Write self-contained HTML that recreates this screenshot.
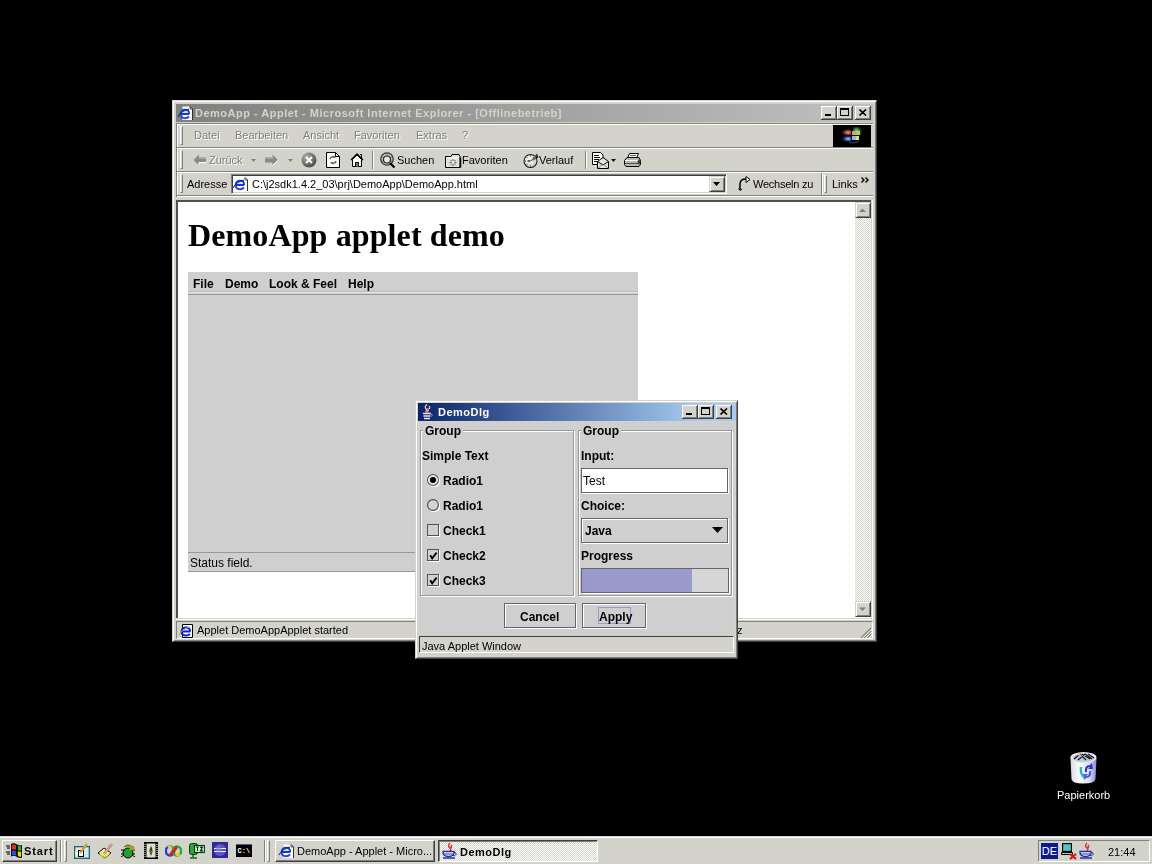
<!DOCTYPE html>
<html><head><meta charset="utf-8">
<style>
*{margin:0;padding:0;box-sizing:border-box}
html,body{width:1152px;height:864px;overflow:hidden;background:#000;font-family:"Liberation Sans",sans-serif;font-size:11px;color:#000}
div,span,svg{position:absolute}
.t{white-space:nowrap;line-height:13px;will-change:transform}
.b{font-weight:bold}
.face{background:#d4d3cb}
.dis{color:#808080;text-shadow:1px 1px #fff}
.wbtn{width:16px;height:14px;background:#d4d3cb;border-style:solid;border-width:0 1px 1px 0;border-color:#404040;box-shadow:inset 1px 1px #fff,inset -1px -1px #808080}
.grip{width:3px;border-style:solid;border-width:1px;border-color:#fff #808080 #808080 #fff}
.sep{width:2px;border-left:1px solid #808080;border-right:1px solid #fff}
.dither{background-color:#fff;background-image:linear-gradient(45deg,#d4d3cb 25%,transparent 25%,transparent 75%,#d4d3cb 75%),linear-gradient(45deg,#d4d3cb 25%,transparent 25%,transparent 75%,#d4d3cb 75%);background-size:2px 2px;background-position:0 0,1px 1px}
.sbtn{width:16px;height:16px;background:#d4d3cb;border-style:solid;border-width:1px;border-color:#d4d3cb #404040 #404040 #d4d3cb;box-shadow:inset 1px 1px #fff,inset -1px -1px #808080}
</style></head><body>
<svg width="0" height="0" style="left:0;top:0"><defs>
<symbol id="ie" viewBox="0 0 16 16">
  <path d="M5.5 2.5H13L15.5 5V16.5H5.5Z" fill="#fff"/>
  <path d="M13 2.5L15.5 5V16.5H5.5" fill="none" stroke="#303030"/>
  <path d="M13 2.5V5H15.5" fill="none" stroke="#303030" stroke-width="0.8"/>
  <path d="M12.2 10H3.6Q3.6 5.7 8 5.7Q12.2 5.7 12.2 10" fill="#c8e8ff" stroke="#1838c8" stroke-width="1.8"/>
  <path d="M3.6 10Q3.6 14.2 8 14.2Q10.5 14.2 12 12.5" fill="none" stroke="#2848d8" stroke-width="2"/>
  <path d="M1 13Q4 7 12 5" fill="none" stroke="#0a1870" stroke-width="1"/>
</symbol>
<symbol id="ieS" viewBox="0 0 16 16">
  <path d="M4.5 1.5H14.5V14.5H4.5Z" fill="#fff" stroke="#000"/>
  <path d="M12.2 8.5H3.6Q3.6 4.5 8 4.5Q12.2 4.5 12.2 8.5" fill="#d0e8ff" stroke="#1020d0" stroke-width="1.8"/>
  <path d="M3.6 8.5Q3.6 12.5 8 12.5Q10.5 12.5 12 11" fill="none" stroke="#1020d0" stroke-width="2"/>
  <path d="M1 12Q4 6 12 4" fill="none" stroke="#b0b020" stroke-width="1"/>
</symbol>
</defs></svg>

<!-- ============ IE window ============ -->
<div style="left:172px;top:100px;width:705px;height:542px;background:#d4d3cb;border-style:solid;border-width:1px;border-color:#d4d3cb #404040 #404040 #d4d3cb;box-shadow:inset 1px 1px #fff,inset -1px -1px #808080"></div>
<!-- title bar -->
<div style="left:176px;top:104px;width:697px;height:18px;background:linear-gradient(90deg,#808080,#c0c0c0)"></div>
<svg style="left:177px;top:104px" width="16" height="16"><use href="#ie"/></svg>
<div class="t b" style="left:195px;top:107px;color:#d4d3cb;letter-spacing:0.5px">DemoApp - Applet - Microsoft Internet Explorer - [Offlinebetrieb]</div>
<div class="wbtn" style="left:821px;top:106px"><div style="left:4px;top:8px;width:6px;height:2px;background:#000"></div></div>
<div class="wbtn" style="left:837px;top:106px"><div style="left:3px;top:2px;width:9px;height:8px;border:1px solid #000;border-top-width:2px"></div></div>
<div class="wbtn" style="left:855px;top:106px"><svg style="left:4px;top:3px" width="8" height="7" viewBox="0 0 8 7"><path d="M0.5 0.5L7 6.5M7 0.5L0.5 6.5" stroke="#000" stroke-width="1.6"/></svg></div>

<!-- rebar frame -->
<div style="left:176px;top:123px;width:697px;height:1px;background:#808080"></div>
<div style="left:176px;top:124px;width:697px;height:1px;background:#fff"></div>
<div style="left:176px;top:123px;width:1px;height:74px;background:#808080"></div>
<div style="left:177px;top:124px;width:1px;height:73px;background:#fff"></div>
<div style="left:177px;top:147px;width:696px;height:1px;background:#808080"></div>
<div style="left:177px;top:148px;width:696px;height:1px;background:#fff"></div>
<div style="left:177px;top:171px;width:696px;height:1px;background:#808080"></div>
<div style="left:177px;top:172px;width:696px;height:1px;background:#fff"></div>
<div style="left:177px;top:195px;width:696px;height:1px;background:#808080"></div>
<div style="left:177px;top:196px;width:696px;height:1px;background:#fff"></div>

<!-- menu band -->
<div class="grip" style="left:180px;top:126px;height:19px"></div>
<div class="t dis" style="left:194px;top:129px">Datei</div>
<div class="t dis" style="left:235px;top:129px">Bearbeiten</div>
<div class="t dis" style="left:303px;top:129px">Ansicht</div>
<div class="t dis" style="left:354px;top:129px">Favoriten</div>
<div class="t dis" style="left:416px;top:129px">Extras</div>
<div class="t dis" style="left:462px;top:129px">?</div>
<!-- windows logo -->
<svg style="left:833px;top:125px" width="38" height="22" viewBox="0 0 38 22">
<defs>
<radialGradient id="wr" cx="0.7" cy="0.5" r="0.6"><stop offset="0" stop-color="#f0a080"/><stop offset="0.5" stop-color="#803030"/><stop offset="1" stop-color="#000" stop-opacity="0"/></radialGradient>
<radialGradient id="wb" cx="0.7" cy="0.4" r="0.6"><stop offset="0" stop-color="#b0d0ff"/><stop offset="0.5" stop-color="#203880"/><stop offset="1" stop-color="#000" stop-opacity="0"/></radialGradient>
<radialGradient id="wg" cx="0.4" cy="0.5" r="0.7"><stop offset="0" stop-color="#c0f0a0"/><stop offset="0.6" stop-color="#206020"/><stop offset="1" stop-color="#000" stop-opacity="0"/></radialGradient>
</defs>
<rect width="38" height="22" fill="#000"/>
<rect x="6" y="4" width="13" height="7" fill="url(#wr)"/>
<rect x="6" y="11" width="13" height="7" fill="url(#wb)"/>
<rect x="20" y="2" width="9" height="10" fill="url(#wg)"/>
<rect x="19" y="6" width="4" height="4" fill="#d8a070"/>
<rect x="23" y="6" width="4" height="4" fill="#a0d080"/>
<rect x="19" y="11" width="4" height="4" fill="#90b8e8"/>
<rect x="23" y="11" width="3" height="4" fill="#e8e050"/>
<path d="M18.5 5V16M18 10.5H28" stroke="#101010" stroke-width="1"/>
<path d="M16 17q4 2 10 -1" stroke="#304080" stroke-width="1.5" fill="none" opacity=".7"/>
</svg>

<!-- toolbar band -->
<div class="grip" style="left:180px;top:150px;height:19px"></div>
<div class="t dis" style="left:209px;top:154px">Zurück</div>
<div class="t" style="left:397px;top:154px">Suchen</div>
<div class="t" style="left:462px;top:154px">Favoriten</div>
<div class="t" style="left:539px;top:154px">Verlauf</div>
<div class="sep" style="left:372px;top:151px;height:18px"></div>
<div class="sep" style="left:585px;top:151px;height:18px"></div>

<!-- address band -->
<div class="grip" style="left:180px;top:174px;height:19px"></div>
<div class="t" style="left:187px;top:178px">Adresse</div>
<div style="left:231px;top:174px;width:496px;height:20px;background:#fff;border-style:solid;border-width:1px;border-color:#808080 #fff #fff #808080;box-shadow:inset 1px 1px #404040,inset -1px -1px #d4d3cb"></div>
<div class="t" style="left:252px;top:178px">C:\j2sdk1.4.2_03\prj\DemoApp\DemoApp.html</div>
<div class="sbtn" style="left:709px;top:176px;height:16px"><svg style="left:3px;top:5px" width="7" height="4" viewBox="0 0 7 4"><path d="M0 0h7L3.5 4z" fill="#000"/></svg></div>
<div class="t" style="left:753px;top:178px;letter-spacing:-0.25px">Wechseln zu</div>
<div class="sep" style="left:821px;top:173px;height:22px"></div>
<div class="grip" style="left:824px;top:175px;height:18px"></div>
<div class="t" style="left:832px;top:178px">Links</div>


<!-- content pane -->
<div style="left:176px;top:200px;width:697px;height:420px;background:#fff;border-style:solid;border-width:2px 0 0 2px;border-color:#505050"></div>
<div style="left:176px;top:618px;width:697px;height:1px;background:#d4d3cb"></div>
<div style="left:176px;top:619px;width:697px;height:1px;background:#fff"></div>
<div style="left:871px;top:200px;width:1px;height:419px;background:#d4d3cb"></div>
<div style="left:872px;top:200px;width:1px;height:420px;background:#fff"></div>
<div class="dither" style="left:855px;top:202px;width:16px;height:415px"></div>
<div class="sbtn" style="left:855px;top:202px"><svg style="left:3px;top:5px" width="8" height="5" viewBox="0 0 8 5"><path d="M0 4h7L3.5 0.5z" fill="#808080"/></svg></div>
<div class="sbtn" style="left:855px;top:601px"><svg style="left:3px;top:5px" width="8" height="5" viewBox="0 0 8 5"><path d="M0 0.5h7L3.5 4z" fill="#808080"/></svg></div>

<div class="t b" style="left:188px;top:217px;font-family:'Liberation Serif',serif;font-size:32px;line-height:37px;letter-spacing:0.12px">DemoApp applet demo</div>


<!-- toolbar icons -->
<svg style="left:193px;top:154px" width="14" height="12" viewBox="0 0 14 12"><path d="M0.5 6L6 0.5V3.5H13V8.5H6V11.5Z" fill="#8a8a8a"/><path d="M6 3.5H13V5H6z" fill="#a8a8a8"/><path d="M6 11.5V8.5H13" fill="none" stroke="#fff" stroke-width="1"/></svg>
<svg style="left:251px;top:159px" width="5" height="3" viewBox="0 0 5 3"><path d="M0 0h5L2.5 3z" fill="#808080"/></svg>
<svg style="left:264px;top:154px" width="15" height="12" viewBox="0 0 15 12"><path d="M14 6L8.5 0.5V3.5H1V8.5H8.5V11.5Z" fill="#8a8a8a"/><path d="M1 3.5H9V5H1z" fill="#a8a8a8"/><path d="M8.5 11.5L14.5 6" fill="none" stroke="#fff" stroke-width="1"/></svg>
<svg style="left:288px;top:159px" width="5" height="3" viewBox="0 0 5 3"><path d="M0 0h5L2.5 3z" fill="#808080"/></svg>
<svg style="left:301px;top:152px" width="16" height="16" viewBox="0 0 16 16"><defs><radialGradient id="gs" cx="0.35" cy="0.3" r="0.8"><stop offset="0" stop-color="#b0b0b0"/><stop offset="1" stop-color="#404040"/></radialGradient></defs><circle cx="8" cy="8" r="7.5" fill="url(#gs)"/><path d="M5 5L11 11M11 5L5 11" stroke="#fff" stroke-width="2"/></svg>
<svg style="left:326px;top:152px" width="14" height="16" viewBox="0 0 14 16"><path d="M0.5 0.5H9.5L13.5 4.5V15.5H0.5Z" fill="#fff" stroke="#000"/><path d="M9.5 0.5V4.5H13.5" fill="none" stroke="#000"/><path d="M4 7a3 3 0 0 1 5-1.5M10 9a3 3 0 0 1-5 1.5" stroke="#6a6a6a" stroke-width="1.6" fill="none"/><path d="M8 4l2 2-3 0z M6 12l-2-2 3 0z" fill="#6a6a6a"/></svg>
<svg style="left:350px;top:153px" width="14" height="14" viewBox="0 0 14 14"><path d="M1 7L7 1L13 7" fill="none" stroke="#000" stroke-width="1.4"/><path d="M2.5 6.5V13.5H11.5V6.5L7 2z" fill="#fff" stroke="#000"/><path d="M5.5 13.5V9.5H8.5V13.5" fill="#808080" stroke="#000"/><path d="M10 1.5h1.5V5" stroke="#000" fill="none"/></svg>
<svg style="left:380px;top:152px" width="17" height="17" viewBox="0 0 17 17"><circle cx="7" cy="7" r="6.2" fill="#c8c8c8" stroke="#303030" stroke-width="1.3"/><path d="M2 5q5 2 10 0M2 9q5 -2 10 0M7 1v12" stroke="#777" stroke-width="1" fill="none"/><circle cx="7" cy="7.5" r="3.5" fill="#e8e8e8" stroke="#222" stroke-width="1.2"/><path d="M10 11L14.5 15.5" stroke="#000" stroke-width="2.2"/></svg>
<svg style="left:445px;top:154px" width="17" height="14" viewBox="0 0 17 14"><path d="M0.5 2.5H6L7 0.5H14L15 2.5V13.5H0.5Z" fill="#e0e0e0" stroke="#000"/><path d="M15.5 3.5V13.5" stroke="#000" stroke-width="1.5"/><path d="M1 4H14" stroke="#fff"/><path d="M8 5v7M4.5 8.5h7M5.5 6l5 5M10.5 6l-5 5" stroke="#555" stroke-width="0.9"/><circle cx="8" cy="8.5" r="1.4" fill="#fff"/></svg>
<svg style="left:523px;top:152px" width="16" height="16" viewBox="0 0 16 16"><circle cx="7.5" cy="9" r="6.5" fill="#d8d8d8" stroke="#202020" stroke-width="1.1"/><circle cx="6.5" cy="8" r="4" fill="#f0f0f0"/><path d="M7.5 3.5v1M2 9h1M7.5 13.5v1M3.5 5l.7.7M3.5 13l.7-.7" stroke="#303030"/><path d="M7.5 9L14 1.5L15.5 5.5Z" fill="#202020"/><path d="M7.5 9L14 1.5L12 8Z" fill="#707070"/><path d="M7.5 9h-3" stroke="#000" stroke-width="1.2"/></svg>
<svg style="left:592px;top:152px" width="17" height="17" viewBox="0 0 17 17"><path d="M0.5 0.5H8.5L11 3V12.5H0.5Z" fill="#fff" stroke="#000"/><path d="M2 3.5h5M2 5.5h6M2 7.5h5M2 9.5h4" stroke="#000" stroke-width="1"/><path d="M5.5 16.5V9.5L11 5.5L16.5 9.5V16.5Z" fill="#e4e4e4" stroke="#000"/><path d="M5.5 9.5L11 13L16.5 9.5" fill="none" stroke="#000"/><path d="M6.5 16L10 12.5M15.5 16L12 12.5" stroke="#808080"/></svg>
<svg style="left:611px;top:159px" width="5" height="3" viewBox="0 0 5 3"><path d="M0 0h5L2.5 3z" fill="#000"/></svg>
<svg style="left:624px;top:153px" width="17" height="14" viewBox="0 0 17 14"><path d="M5.5 0.5H14.5L12.5 5H3.5Z" fill="#fff" stroke="#000"/><path d="M6 2.5h6" stroke="#606060"/><path d="M0.5 7.5L3 4.5H15L16.5 7.5V11.5L15 13.5H2L0.5 11.5Z" fill="#b8b8b8" stroke="#000"/><path d="M1 7.5H16" stroke="#fff"/><path d="M1 10.5H16" stroke="#505050"/><ellipse cx="15" cy="9" rx="1.5" ry="2.5" fill="#404040"/></svg>
<!-- address icons -->
<svg style="left:232px;top:175px" width="16" height="16"><use href="#ie"/></svg>
<svg style="left:737px;top:176px" width="14" height="15" viewBox="0 0 14 15"><path d="M3 14V8Q3 3 9 3H11" fill="none" stroke="#000" stroke-width="1.5"/><path d="M9 0.5L13 3.5L9 6.5Z" fill="#fff" stroke="#000"/><path d="M5 13l-2 1.5-1.5-2" stroke="#000" fill="none"/></svg>
<svg style="left:861px;top:177px" width="8" height="7" viewBox="0 0 8 7"><path d="M0.5 0.5L3 3L0.5 5.5M4.5 0.5L7 3L4.5 5.5" fill="none" stroke="#000" stroke-width="1.4"/></svg>
<!-- status icon -->
<svg style="left:178px;top:623px" width="16" height="16"><use href="#ieS"/></svg>
<!-- resize grip -->
<svg style="left:860px;top:627px" width="12" height="12" viewBox="0 0 12 12"><path d="M11 1L1 11M11 4L4 11M11 7L7 11" stroke="#808080" stroke-width="1.2"/><path d="M12 2L2 12M12 5L5 12M12 8L8 12" stroke="#fff" stroke-width="0.8"/></svg>

<!-- applet -->
<div style="left:188px;top:272px;width:450px;height:300px;background:#cfcfcf"></div>
<div style="left:188px;top:291px;width:450px;height:1px;background:#bdbdbd"></div>
<div style="left:188px;top:292px;width:450px;height:1px;background:#e6e6e6"></div>
<div style="left:188px;top:294px;width:450px;height:1px;background:#999"></div>
<div class="t b" style="left:193px;top:278px;font-size:12px">File</div>
<div class="t b" style="left:225px;top:278px;font-size:12px">Demo</div>
<div class="t b" style="left:269px;top:278px;font-size:12px">Look &amp; Feel</div>
<div class="t b" style="left:348px;top:278px;font-size:12px">Help</div>
<div style="left:188px;top:552px;width:450px;height:1px;background:#999"></div>
<div style="left:188px;top:571px;width:450px;height:1px;background:#999"></div>
<div class="t" style="left:190px;top:557px;font-size:12px">Status field.</div>

<!-- status bar -->
<div style="left:176px;top:621px;width:697px;height:18px;border-style:solid;border-width:1px;border-color:#808080 #fff #fff #808080"></div>
<div class="t" style="left:197px;top:624px">Applet DemoAppApplet started</div>
<div class="t" style="left:737px;top:624px">z</div>


<!-- ============ Dialog ============ -->
<div style="left:415px;top:400px;width:323px;height:259px;background:#d4d3cb;border-style:solid;border-width:1px;border-color:#d4d3cb #404040 #404040 #d4d3cb;box-shadow:inset 1px 1px #fff,inset -1px -1px #808080"></div>
<div style="left:418px;top:403px;width:318px;height:18px;background:linear-gradient(90deg,#0a246a 0%,#a6caf0 88%)"></div>
<svg style="left:421px;top:404px" width="14" height="16" viewBox="0 0 14 16">
  <path d="M6 0.5Q3 3 5 5Q6.5 6.5 4.5 8" stroke="#e8c8e8" stroke-width="1.2" fill="none"/>
  <path d="M4 4.5Q6 3 6 6Q6 8 4.5 8.5L7.5 8.5Q9 6 7.5 4Z" fill="#f08050"/>
  <path d="M8 2Q9.5 3 8.5 5" stroke="#fff" stroke-width="1" fill="none"/>
  <path d="M2 9.5H10M2.5 12H9.5M3 14.5H9" stroke="#e8e0ff" stroke-width="1.3"/>
  <path d="M10 10Q12.5 10.5 10.5 12.5" stroke="#9090e0" stroke-width="1" fill="none"/>
</svg>
<div class="t b" style="left:438px;top:406px;color:#fff;letter-spacing:0.5px">DemoDlg</div>
<div class="wbtn" style="left:682px;top:405px"><div style="left:4px;top:8px;width:6px;height:2px;background:#000"></div></div>
<div class="wbtn" style="left:698px;top:405px"><div style="left:3px;top:2px;width:9px;height:8px;border:1px solid #000;border-top-width:2px"></div></div>
<div class="wbtn" style="left:716px;top:405px"><svg style="left:4px;top:3px" width="8" height="7" viewBox="0 0 8 7"><path d="M0.5 0.5L7 6.5M7 0.5L0.5 6.5" stroke="#000" stroke-width="1.6"/></svg></div>
<!-- dialog body -->
<div style="left:419px;top:422px;width:315px;height:214px;background:#cfcfcf"></div>
<!-- group boxes -->
<div style="left:420px;top:430px;width:154px;height:166px;border:1px solid #999;box-shadow:1px 1px #fff,inset 1px 1px #fff"></div>
<div style="left:423px;top:425px;width:40px;height:12px;background:#cfcfcf"></div>
<div class="t b" style="left:425px;top:425px;font-size:12px">Group</div>
<div style="left:578px;top:430px;width:154px;height:166px;border:1px solid #999;box-shadow:1px 1px #fff,inset 1px 1px #fff"></div>
<div style="left:581px;top:425px;width:40px;height:12px;background:#cfcfcf"></div>
<div class="t b" style="left:583px;top:425px;font-size:12px">Group</div>
<!-- left group -->
<div class="t b" style="left:422px;top:450px;font-size:12px">Simple Text</div>
<svg style="left:427px;top:474px" width="13" height="13" viewBox="0 0 13 13"><circle cx="6.5" cy="6.5" r="5.5" fill="none" stroke="#fff" stroke-width="1.2" transform="translate(0.6,0.6)"/><circle cx="6" cy="6" r="5.4" fill="#ccc" stroke="#4a4a4a" stroke-width="1.1"/><circle cx="6" cy="6" r="4.3" fill="none" stroke="#fff" stroke-width="1"/><circle cx="6" cy="6" r="3" fill="#000"/></svg>
<div class="t b" style="left:443px;top:475px;font-size:12px">Radio1</div>
<svg style="left:427px;top:499px" width="13" height="13" viewBox="0 0 13 13"><circle cx="6.5" cy="6.5" r="5.5" fill="none" stroke="#fff" stroke-width="1.2" transform="translate(0.6,0.6)"/><circle cx="6" cy="6" r="5.4" fill="#d4d4d4" stroke="#4a4a4a" stroke-width="1.1"/></svg>
<div class="t b" style="left:443px;top:500px;font-size:12px">Radio1</div>
<svg style="left:427px;top:524px" width="13" height="13" viewBox="0 0 13 13"><rect x="1.5" y="1.5" width="11" height="11" fill="none" stroke="#fff"/><rect x="0.5" y="0.5" width="11" height="11" fill="#d0d0d0" stroke="#555"/></svg>
<div class="t b" style="left:443px;top:525px;font-size:12px">Check1</div>
<svg style="left:427px;top:549px" width="13" height="13" viewBox="0 0 13 13"><rect x="1.5" y="1.5" width="11" height="11" fill="none" stroke="#fff"/><rect x="0.5" y="0.5" width="11" height="11" fill="#d0d0d0" stroke="#555"/><path d="M3.2 6.2L5.2 9.3L9.6 3.6" stroke="#000" stroke-width="1.9" fill="none"/></svg>
<div class="t b" style="left:443px;top:550px;font-size:12px">Check2</div>
<svg style="left:427px;top:574px" width="13" height="13" viewBox="0 0 13 13"><rect x="1.5" y="1.5" width="11" height="11" fill="none" stroke="#fff"/><rect x="0.5" y="0.5" width="11" height="11" fill="#d0d0d0" stroke="#555"/><path d="M3.2 6.2L5.2 9.3L9.6 3.6" stroke="#000" stroke-width="1.9" fill="none"/></svg>
<div class="t b" style="left:443px;top:575px;font-size:12px">Check3</div>
<!-- right group -->
<div class="t b" style="left:581px;top:450px;font-size:12px">Input:</div>
<div style="left:581px;top:468px;width:147px;height:25px;background:#fff;border:1px solid #666;box-shadow:1px 1px #fff"></div>
<div class="t" style="left:583px;top:475px;font-size:12px">Test</div>
<div class="t b" style="left:581px;top:500px;font-size:12px">Choice:</div>
<div style="left:581px;top:518px;width:147px;height:25px;background:#cfcfcf;border:1px solid #666;box-shadow:1px 1px #fff,inset 1px 1px #fff"></div>
<div class="t b" style="left:585px;top:525px;font-size:12px">Java</div>
<svg style="left:712px;top:527px" width="11" height="6" viewBox="0 0 11 6"><path d="M0 0h11L5.5 6z" fill="#000"/></svg>
<div class="t b" style="left:581px;top:550px;font-size:12px">Progress</div>
<div style="left:581px;top:568px;width:148px;height:25px;background:#d6d6d6;border:1px solid #666;box-shadow:1px 1px #fff"></div>
<div style="left:582px;top:569px;width:110px;height:23px;background:#9999cc"></div>
<!-- buttons -->
<div style="left:504px;top:603px;width:72px;height:25px;border:1px solid #666;box-shadow:1px 1px #fff,inset 1px 1px #fff"></div>
<div class="t b" style="left:520px;top:611px;font-size:12px">Cancel</div>
<div style="left:582px;top:603px;width:64px;height:25px;border:1px solid #666;box-shadow:1px 1px #fff,inset 1px 1px #fff"></div>
<div style="left:598px;top:607px;width:33px;height:17px;border:1px solid #9999cc"></div>
<div class="t b" style="left:599px;top:611px;font-size:12px">Apply</div>
<!-- java applet window strip -->
<div style="left:419px;top:636px;width:315px;height:17px;border-style:solid;border-width:1px;border-color:#404040 #fff #fff #404040"></div>
<div class="t" style="left:422px;top:640px">Java Applet Window</div>

<!-- ============ Desktop icon ============ -->
<svg style="left:1068px;top:750px" width="32" height="36" viewBox="0 0 32 36">
  <defs><linearGradient id="bin" x1="0" x2="1"><stop offset="0" stop-color="#d8d8f0"/><stop offset="0.35" stop-color="#fffff0"/><stop offset="0.7" stop-color="#e0e0f8"/><stop offset="1" stop-color="#8a8ad0"/></linearGradient></defs>
  <path d="M2.5 8 L3.5 29 Q4 33.5 15 33.5 Q27 33.5 27.5 29 L28.5 8 Z" fill="url(#bin)"/>
  <ellipse cx="15.5" cy="7.5" rx="13" ry="5.5" fill="#e8e8f0"/>
  <ellipse cx="15.5" cy="8" rx="11" ry="4" fill="#b8c8d8"/>
  <path d="M6 9L12 4L18 10M10 10L17 4L24 9M14 4L22 9M20 4L26 8" stroke="#101020" stroke-width="1.1" fill="none"/>
  <path d="M8 5L11 3L14 6z" fill="#f0c0a0"/>
  <path d="M17 22 Q16 15 22 15 L24 13 L25 19 L20 19 L22 17 Q18.5 17 19 22Z" fill="#2838d0"/>
  <path d="M23 21 Q24 28 18 28 L16 30 L15 24 L20 24 L18 26 Q21.5 26 21 21Z" fill="#4060e0"/>
  <path d="M13 17 Q12 24 16 27" stroke="#30b0e0" stroke-width="2.5" fill="none"/>
</svg>
<div class="t" style="left:1057px;top:789px;color:#fff">Papierkorb</div>

<!-- ============ Taskbar ============ -->
<div style="left:0;top:836px;width:1152px;height:28px;background:#d4d3cb;border-top:1px solid #d4d3cb;box-shadow:inset 0 1px #fff"></div>
<div style="left:2px;top:840px;width:55px;height:22px;background:#d4d3cb;border-style:solid;border-width:1px;border-color:#fff #404040 #404040 #fff;box-shadow:inset -1px -1px #808080"></div>
<svg style="left:5px;top:842px" width="18" height="17" viewBox="0 0 18 17">
  <path d="M6 2Q9 0.5 12 2.5V15Q9 13 6 14.5Z" fill="#000"/>
  <path d="M12 2.5Q15 4 17 3V15.5Q15 16.5 12 15Z" fill="#000"/>
  <path d="M6.8 3Q9 2 11.2 3.3V8Q9 6.8 6.8 7.8Z" fill="#e83020"/>
  <path d="M12.8 3.6Q14.5 4.6 16.2 4.1V8.6Q14.5 9.1 12.8 8.3Z" fill="#30b030"/>
  <path d="M6.8 8.8Q9 7.8 11.2 9V13.7Q9 12.5 6.8 13.5Z" fill="#2050e8"/>
  <path d="M12.8 9.3Q14.5 10.1 16.2 9.6V14.4Q14.5 15 12.8 14Z" fill="#f0d020"/>
  <path d="M1 4h4M2 6h3M1 10h4M2 12h3" stroke="#000" stroke-width="1.2"/>
  <path d="M1.5 4h2M1.5 10h2" stroke="#e83020" stroke-width="0.8"/>
  <path d="M2 6h2M2 12h2" stroke="#2050e8" stroke-width="0.8"/>
</svg>
<div class="t b" style="left:24px;top:845px;letter-spacing:0.9px">Start</div>
<div class="sep" style="left:60px;top:840px;height:22px"></div>
<div class="grip" style="left:64px;top:840px;height:22px"></div>
<div class="sep" style="left:264px;top:840px;height:22px"></div>
<div class="grip" style="left:267px;top:840px;height:22px"></div>
<!-- task buttons -->
<div style="left:275px;top:840px;width:160px;height:22px;background:#d4d3cb;border-style:solid;border-width:1px;border-color:#fff #404040 #404040 #fff;box-shadow:inset -1px -1px #808080"></div>
<div class="t" style="left:297px;top:845px">DemoApp - Applet - Micro...</div>
<div class="dither" style="left:438px;top:840px;width:160px;height:22px;border-style:solid;border-width:1px;border-color:#404040 #fff #fff #404040;box-shadow:inset 1px 1px #808080"></div>
<div class="t b" style="left:460px;top:846px;letter-spacing:0.5px">DemoDlg</div>

<!-- quick launch -->
<svg style="left:74px;top:843px" width="16" height="16" viewBox="0 0 16 16"><rect x="0.5" y="3.5" width="15" height="12" fill="#d8e8e8" stroke="#0a3050"/><rect x="1" y="4" width="14" height="11" fill="none" stroke="#3aa0b0"/><circle cx="5" cy="10" r="4" fill="#f0f0e0"/><rect x="4.5" y="7.5" width="5" height="6" fill="#fff" stroke="#000"/><path d="M6 10L13 1" stroke="#d0a030" stroke-width="2.2"/></svg>
<svg style="left:97px;top:843px" width="17" height="16" viewBox="0 0 17 16"><path d="M1 10L7 5L14 10L8 15Z" fill="#f0f0a0" stroke="#000"/><path d="M3 11L8 14L13 10" stroke="#e0e020" stroke-width="1.5" fill="none"/><path d="M7 11L15 1" stroke="#c07070" stroke-width="2.5"/><path d="M7 11L15 1" stroke="#f0c0a0" stroke-width="1"/></svg>
<svg style="left:120px;top:843px" width="16" height="16" viewBox="0 0 16 16"><path d="M4 4Q8 0 12 4" fill="#a0a020" stroke="#606010"/><ellipse cx="8" cy="10" rx="5" ry="5" fill="#20a030" stroke="#000"/><path d="M1 7h3M1 11h3M1 14l3-2M12 7h3M12 11h3M15 14l-3-2" stroke="#000"/><circle cx="12" cy="5" r="2.5" fill="#a0a020"/></svg>
<svg style="left:144px;top:842px" width="14" height="17" viewBox="0 0 14 17"><rect x="0" y="0" width="14" height="17" fill="#000"/><rect x="2.5" y="1.5" width="9" height="14" fill="#e0e0d0"/><path d="M1 2v13M13 2v13" stroke="#fff" stroke-dasharray="1 1"/><path d="M7 4q3 4 0 10q-3 -6 0 -10" fill="#404020"/><path d="M5 10h4" stroke="#80a040"/></svg>
<svg style="left:165px;top:845px" width="17" height="12" viewBox="0 0 17 12"><ellipse cx="5" cy="6" rx="4.2" ry="4.5" fill="none" stroke="#2040d0" stroke-width="2.5"/><ellipse cx="12" cy="6" rx="4.2" ry="4.5" fill="none" stroke="#20b030" stroke-width="2.5"/><path d="M3 2.5Q5 1 7 3" stroke="#e0d020" stroke-width="2.5" fill="none"/><path d="M11 9Q13 11 15 9" stroke="#e0d020" stroke-width="2.5" fill="none"/><path d="M5 10L12 2" stroke="#e02020" stroke-width="2.8"/></svg>
<svg style="left:189px;top:842px" width="16" height="17" viewBox="0 0 16 17"><rect x="0.5" y="1.5" width="8" height="11" rx="2" fill="#30a040" stroke="#064010"/><rect x="5.5" y="3.5" width="10" height="7" fill="#d0f0d0" stroke="#064010" stroke-width="1.2"/><path d="M7 5h3M8.5 5v4M11 5h3l-3 4h3" stroke="#064010"/><path d="M4 13v2M1 16h7" stroke="#106020" stroke-width="1.5"/></svg>
<svg style="left:212px;top:842px" width="16" height="16" viewBox="0 0 16 16"><rect width="16" height="16" fill="#302a90"/><circle cx="8" cy="8" r="6" fill="#6058c0"/><path d="M2 6.5h12M2 9.5h12" stroke="#e8e8f8" stroke-width="1.2"/><circle cx="6.5" cy="7" r="2.5" fill="#8080d8" opacity=".6"/></svg>
<svg style="left:236px;top:844px" width="16" height="13" viewBox="0 0 16 13"><rect width="16" height="13" fill="#000"/><path d="M0 0.5h16" stroke="#4050c0"/><text x="1.5" y="9" font-family="Liberation Mono" font-size="7" font-weight="bold" fill="#fff">C:\</text></svg>
<!-- task button icons -->
<svg style="left:278px;top:842px" width="16" height="16"><use href="#ie"/></svg>
<svg style="left:442px;top:842px" width="16" height="17" viewBox="0 0 16 17"><path d="M8 1q-3 3 0 5q2 2 -1 4M10 3q-2 2 0 3" stroke="#e03020" stroke-width="1.4" fill="none"/><path d="M1 9.5h11v1.5q0 3 -5.5 3.5q-5.5 -0.5 -5.5 -3.5z" fill="#fff" stroke="#2030a0" stroke-width="1.3"/><path d="M12 10.5q3 0 2 2t-3 1" stroke="#2030a0" fill="none"/><path d="M1 12h10" stroke="#2030a0"/><path d="M1 16h12" stroke="#2030a0" stroke-width="1.5"/></svg>
<!-- tray icons -->
<svg style="left:1061px;top:843px" width="17" height="17" viewBox="0 0 17 17"><rect x="1.5" y="0.5" width="9" height="8" fill="#40a0a0" stroke="#000"/><rect x="3" y="2" width="6" height="5" fill="#60c0c0"/><path d="M0.5 9.5h11v2h-11z" fill="#c8c8c8" stroke="#000"/><path d="M9 11l6 5M15 11l-6 5" stroke="#e01010" stroke-width="2.2"/></svg>
<svg style="left:1079px;top:842px" width="16" height="17" viewBox="0 0 16 17"><path d="M8 1q-3 3 0 5q2 2 -1 4M10 3q-2 2 0 3" stroke="#e03020" stroke-width="1.4" fill="none"/><path d="M1 9.5h11v1.5q0 3 -5.5 3.5q-5.5 -0.5 -5.5 -3.5z" fill="#fff" stroke="#2030a0" stroke-width="1.3"/><path d="M12 10.5q3 0 2 2t-3 1" stroke="#2030a0" fill="none"/><path d="M1 12h10" stroke="#2030a0"/><path d="M1 16h12" stroke="#2030a0" stroke-width="1.5"/></svg>

<!-- tray -->
<div style="left:1038px;top:840px;width:112px;height:22px;border-style:solid;border-width:1px;border-color:#808080 #fff #fff #808080"></div>
<div style="left:1041px;top:843px;width:17px;height:16px;background:#0a1c8c;color:#fff;font-size:11px;line-height:16px;text-align:center">DE</div>
<div class="t" style="left:1108px;top:846px">21:44</div>

</body></html>
